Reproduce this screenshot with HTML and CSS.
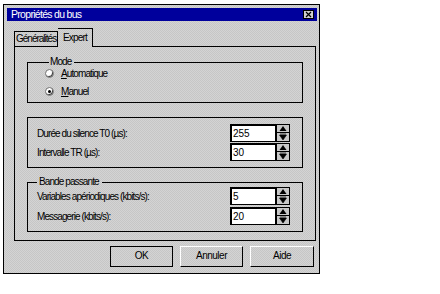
FILE: index.html
```html
<!DOCTYPE html>
<html lang="fr">
<head>
<meta charset="utf-8">
<title>Propriétés du bus</title>
<link rel="stylesheet" href="styles.css">
</head>
<body>
<div class="dialog">
  <div class="titlebar">
    <span class="title">Propriétés du bus</span>
    <span class="close">
      <svg width="9" height="7" viewBox="0 0 9 7"><path d="M2 1 L7 6 M7 1 L2 6" stroke="#000" stroke-width="1.2" fill="none"/></svg>
    </span>
  </div>
  <div class="tabs">
    <div class="tab">Généralités</div>
    <div class="tab active">Expert</div>
  </div>
  <div class="panel">
    <fieldset class="group mode">
      <legend>Mode</legend>
      <div class="radio-row"><span class="radio"></span><span><u>A</u>utomatique</span></div>
      <div class="radio-row"><span class="radio checked"></span><span><u>M</u>anuel</span></div>
    </fieldset>
    <div class="group box">
      <div class="field-row"><span class="label">Durée du silence T0 (µs):</span><span class="spinner"><span class="input">255</span><span class="spin"><svg width="14" height="18" viewBox="0 0 14 18"><rect x="0.5" y="0.5" width="13" height="8" fill="#c8c8c8" stroke="#000"/><rect x="0.5" y="8.5" width="13" height="9" fill="#c8c8c8" stroke="#000"/><path d="M7 2 L10.5 7 L3.5 7 Z" fill="#000"/><path d="M4 10 H10 M3.5 11 L10.5 11 L7 16 Z" fill="#000" stroke="#000" stroke-width="0.6"/></svg></span></span></div>
      <div class="field-row"><span class="label">Intervalle TR (µs):</span><span class="spinner"><span class="input">30</span><span class="spin"><svg width="14" height="18" viewBox="0 0 14 18"><rect x="0.5" y="0.5" width="13" height="8" fill="#c8c8c8" stroke="#000"/><rect x="0.5" y="8.5" width="13" height="9" fill="#c8c8c8" stroke="#000"/><path d="M7 2 L10.5 7 L3.5 7 Z" fill="#000"/><path d="M4 10 H10 M3.5 11 L10.5 11 L7 16 Z" fill="#000" stroke="#000" stroke-width="0.6"/></svg></span></span></div>
    </div>
    <fieldset class="group band">
      <legend>Bande passante</legend>
      <div class="field-row"><span class="label">Variables apériodiques (kbits/s):</span><span class="spinner"><span class="input">5</span><span class="spin"><svg width="14" height="18" viewBox="0 0 14 18"><rect x="0.5" y="0.5" width="13" height="8" fill="#c8c8c8" stroke="#000"/><rect x="0.5" y="8.5" width="13" height="9" fill="#c8c8c8" stroke="#000"/><path d="M7 2 L10.5 7 L3.5 7 Z" fill="#000"/><path d="M4 10 H10 M3.5 11 L10.5 11 L7 16 Z" fill="#000" stroke="#000" stroke-width="0.6"/></svg></span></span></div>
      <div class="field-row"><span class="label">Messagerie (kbits/s):</span><span class="spinner"><span class="input">20</span><span class="spin"><svg width="14" height="18" viewBox="0 0 14 18"><rect x="0.5" y="0.5" width="13" height="8" fill="#c8c8c8" stroke="#000"/><rect x="0.5" y="8.5" width="13" height="9" fill="#c8c8c8" stroke="#000"/><path d="M7 2 L10.5 7 L3.5 7 Z" fill="#000"/><path d="M4 10 H10 M3.5 11 L10.5 11 L7 16 Z" fill="#000" stroke="#000" stroke-width="0.6"/></svg></span></span></div>
    </fieldset>
  </div>
  <div class="buttons">
    <div class="btn default">OK</div>
    <div class="btn">Annuler</div>
    <div class="btn">Aide</div>
  </div>
</div>
</body>
</html>
```
FILE: styles.css
```css
* { box-sizing: border-box; }
html, body { margin: 0; padding: 0; background: #fff; }
body {
  font-family: "Liberation Sans", Arial, sans-serif;
  font-size: 10px;
  letter-spacing: -0.9px;
  color: #000;
}
.dialog {
  margin: 4px 0 0 3px;
  width: 317px;
  height: 270px;
  border: 1px solid #000;
  background: repeating-conic-gradient(#c6c6c6 0 25%, #d4d4d4 0 50%) 0 0 / 2px 2px;
  padding: 3px 2px 0 3px;
  display: flex;
  flex-direction: column;
}
.titlebar {
  height: 13px;
  background: #00009c;
  color: #fff;
  display: flex;
  align-items: center;
  justify-content: space-between;
  padding: 0 3px 0 4px;
}
.title { font-size: 10.5px; line-height: 13px; letter-spacing: -0.7px; }
.close {
  width: 11px;
  height: 9px;
  background: #d0d0d0;
  border: 1px solid #000;
  display: flex;
  align-items: center;
  justify-content: center;
}
.close svg { display: block; }
.tabs {
  display: flex;
  align-items: flex-end;
  margin: 7px 0 0 7px;
  height: 18px;
}
.tab {
  border: 1px solid #000;
  border-bottom: none;
  height: 15px;
  width: 44px;
  padding: 0 0 0 1px;
  line-height: 14px;
  letter-spacing: -1px;
}
.tab + .tab { border-left: none; }
.tab.active {
  height: 19px;
  width: 35px;
  margin-bottom: -1px;
  padding: 0 0 0 5px;
  line-height: 17px;
  letter-spacing: -0.8px;
  position: relative;
  z-index: 1;
  background: repeating-conic-gradient(#c6c6c6 0 25%, #d4d4d4 0 50%) 0 0 / 2px 2px;
}
.panel {
  margin-left: 7px;
  width: 302px;
  height: 195px;
  border: 1px solid #000;
  padding: 9px 12px 0 12px;
  display: flex;
  flex-direction: column;
}
.group {
  margin: 0;
  border: 1px solid #000;
  min-width: 0;
  width: 276px;
}
fieldset.group { padding: 0; }
legend {
  padding: 0 3px 0 1px;
  margin-left: 4px;
  line-height: 12px;
  height: 12px;
}
.band legend { margin-left: 0; padding-left: 2px; line-height: 10px; height: 10px; }
.mode {
  padding: 0 0 6px 17px !important;
  display: flex;
  flex-direction: column;
  gap: 8px;
}
.radio-row {
  display: flex;
  align-items: center;
  height: 10px;
  gap: 7px;
}
.radio {
  width: 9px;
  height: 9px;
  border-radius: 50%;
  background: #fff;
  border: 1px solid #707070;
  box-shadow: -1px -1px 0 #404040 inset;
  display: inline-block;
  position: relative;
}
.radio.checked::after {
  content: "";
  position: absolute;
  left: 2px;
  top: 2px;
  width: 3px;
  height: 3px;
  border-radius: 50%;
  background: #000;
}
.box {
  margin-top: 14px;
  padding: 6px 8px 6px 9px;
  display: flex;
  flex-direction: column;
  gap: 1px;
}
.band {
  margin-top: 9px;
  padding: 0 8px 6px 9px !important;
  display: flex;
  flex-direction: column;
  gap: 2px;
}
.field-row {
  display: flex;
  align-items: center;
  justify-content: space-between;
  height: 18px;
  padding-right: 4px;
}
.spinner { display: flex; }
.input {
  width: 46px;
  height: 18px;
  background: #fff;
  border: 1px solid #000;
  border-top-width: 2px;
  border-left-width: 2px;
  padding-left: 1px;
  line-height: 15px;
  letter-spacing: 0;
}
.spin { width: 14px; height: 18px; }
.spin svg { display: block; }
.buttons {
  display: flex;
  justify-content: flex-end;
  gap: 7px;
  margin-top: 5px;
  padding-right: 3px;
}
.btn {
  width: 63px;
  height: 21px;
  border: 1px solid #000;
  border-top-color: #fff;
  border-left-color: #fff;
  text-align: center;
  line-height: 18px;
  letter-spacing: -0.5px;
}
.btn.default {
  border-color: #000;
}
.btn:last-child { width: 64px; }
```
